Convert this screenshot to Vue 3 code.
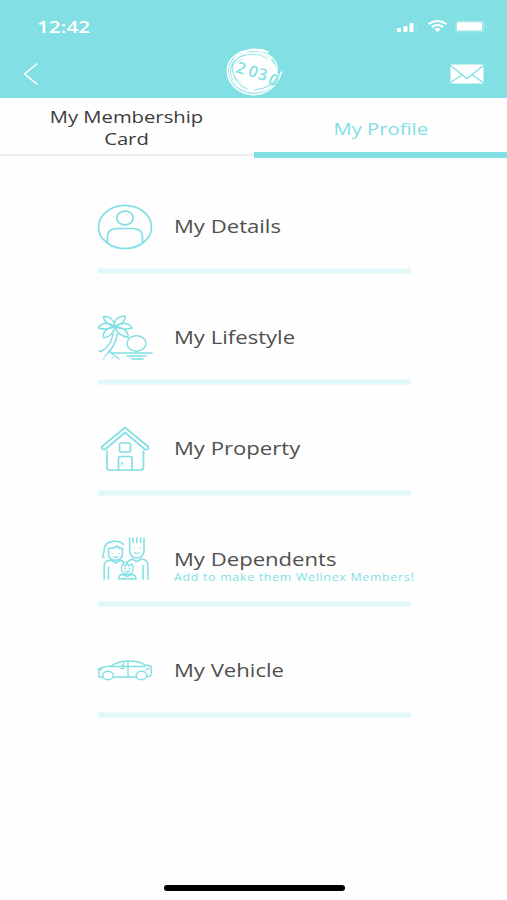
<template>
  <div class="screen">
    <header class="header">
      <div class="status">
        <span class="time">12:42</span>
        <svg class="status_icons" width="92" height="16" viewBox="0 0 92 16" fill="#fff">
          <rect x="1" y="10" width="4" height="4" rx="1" />
          <rect x="7.5" y="8" width="4" height="6" rx="1" />
          <rect x="13.5" y="5" width="4" height="9" rx="1" />
          <rect x="19.5" y="3" width="3" height="11" rx="1" opacity=".1" />
          <g fill="none" stroke="#fff" stroke-width="2.2">
            <path d="M32.5 6.2Q41.5 -.2 50.5 6.2" />
            <path d="M35.8 9Q41.5 5 47.2 9" />
          </g>
          <path d="M38.2 11.2Q41.5 9 44.8 11.2L41.5 14Z" />
          <rect x="59" y="2.5" width="29.5" height="12" rx="3" opacity=".22" />
          <rect x="61" y="4.3" width="25" height="8.2" rx="1.5" />
          <rect x="89.5" y="6.5" width="1.5" height="4" rx="1" opacity=".25" />
        </svg>
      </div>
      <nav class="bar">
        <svg class="back" width="16" height="24" viewBox="0 0 16 24">
          <path d="M14.5 1.5L1.5 12L14.5 22.5" fill="none" stroke="#fff" stroke-width="1.6" />
        </svg>
        <svg class="logo" width="60" height="50" viewBox="0 0 60 50">
          <ellipse cx="30" cy="25.5" rx="23" ry="19" fill="#fff" />
          <g fill="none" stroke="#fff" stroke-linecap="round">
            <path d="M44 5C31 -.5 12 3 5.5 15C-.5 28 7 43 24 47C39 50 53 41 57.5 25" stroke-width="1.6" />
            <path d="M40 3C25 1 10 7 6 20C3 33 14 44 29 45C43 45 52 37 54 27" stroke-width="1.3" />
            <path d="M17 5.5C31 0 47 6 52 16C54 21 53 26 52 29" stroke-width="1.3" />
            <path d="M11 12C20 3 38 4 47 12" stroke-width="1.8" />
            <path d="M48 38C42 44 34 46 24 44" stroke-width="1.5" />
          </g>
          <g fill="none" stroke="#82dfe3" stroke-linecap="round">
            <path d="M9 17C7 28 13 38 23 42" stroke-width="1" />
            <path d="M52 32C47 39 40 42 31 43" stroke-width="1.2" />
            <path d="M14 11C24 5 38 7 44 12" stroke-width=".7" />
            <path d="M11 16L19 12M11 30L17 36" stroke-width=".7" />
          </g>
          <text x="11 23 33 43" y="25 28 32 36" rotate="18 22 12 26" class="logo_text">2030</text>
        </svg>
        <svg class="mail" width="34" height="20" viewBox="0 0 34 20">
          <rect x=".5" y=".5" width="33" height="19" rx="1" fill="#fff" />
          <path d="M.5 1.5L17 14.5L33.5 1.5M.5 18.5L12.5 10.5M33.5 18.5L21.5 10.5" fill="none" stroke="#82dfe3" stroke-width="1.4" />
        </svg>
      </nav>
    </header>

    <div class="tabs">
      <div class="tab"><span class="tab_label">My Membership<br>Card</span></div>
      <div class="tab active"><span class="tab_label">My Profile</span></div>
    </div>

    <main class="list">
      <div v-for="item in items" :key="item.icon" class="row">
        <svg class="icon" width="56" height="50" viewBox="0 0 56 50">
          <g v-if="item.icon === 'user'">
            <ellipse cx="28" cy="25" rx="26.5" ry="21.6" />
            <ellipse cx="28" cy="16" rx="8.2" ry="6.9" />
            <path d="M10.5 41V35Q10.5 26.5 21 26.5H35Q45.5 26.5 45.5 35V41" />
          </g>
          <g v-else-if="item.icon === 'palm'" stroke-width="1.5">
            <path d="M18 13.5C17 7 13 3 6.500 3.500C6.500 8 11 12 18 13.500C12 8.500 3 10 1.500 15C7 17 13 16 18 13.500C11 14 5 19 6.500 24.500C13 24.500 17 19 18 13.500Z" />
            <path d="M18 13.5C16 8 20 3.500 28 3C29 8 24 12 18 13.500C24 8.500 33 10 35 15C29 17 23 16 18 13.500C26 14 32 19 31 24.500C24 23.500 19 19 18 13.500Z" />
            <path d="M16 21C15 28 12 34 4 38.5L2 38M20.5 21C19 29 16 35 10 41M12 38L22 46" />
            <ellipse cx="39.5" cy="30.5" rx="9.5" ry="7.8" />
            <path d="M14 40H55M30 43H49M35 46H46" />
            <path d="M9 42L8 43M6.5 45.5h.5M15 44.5h.5" />
          </g>
          <g v-else-if="item.icon === 'house'">
            <path d="M28 3.5L4.500 23Q4.500 26 8 25.500L28 8.500L48 25.500Q52 26 51.500 23Z" />
            <path d="M10 27V43.5Q10 46 13 46H43.5Q46.5 46 46.5 43.5V27" />
            <rect x="22.5" y="19" width="11" height="9" rx="2" />
            <path d="M21.5 46V34Q21.5 32.5 23.5 32.5H33Q35 32.5 35 34V46M25 38.5V40" />
          </g>
          <g v-else-if="item.icon === 'family'" stroke-width="1.6" transform="translate(-.5 -.5) scale(.96 1)">
            <path d="M12.5 14V19C12.5 28 27 28 27 19V14Q23 14 21.5 11.5Q18 14 12.5 14ZM8 23Q5 23 7 20Q8 18 8 15C8 5 25 5 28 10" />
            <path d="M34.500 3.500V16C34.500 26 49.500 26 49.500 16V3.500M38 3.500V8M42 3.500V8M46 3.500V8" />
            <path d="M8 44.5V30Q9 26 15 25.500L20 28.500L25 25.500L29 28" />
            <path d="M12.5 33V44.5M31 28L37 24.500L42 27L47 24.500Q53.500 25 53.500 31V44.500M48.500 31V44.500" />
            <path d="M16 19h.5M23 19h.5M17.500 22Q20 24 22 22M39 14h.5M45 14h.5M40 18Q42 20 44.500 18" stroke-width="1.1" />
            <path d="M26 31.500L28 29.500L30 31.500L32 29L34 31.500L36.500 29.500L38 31.500V34.500C38 41.500 26 41.500 26 34.500ZM29.500 34h.5M34 34h.5M30 36.500Q32 38.500 34 36.500" stroke-width="1.3" />
            <path d="M23 44.5Q22.500 40 28 40L32 42L36 40Q41.500 40 41 44.500ZM28 44.500V43.500M36 44.500V43.500" />
          </g>
          <g v-else stroke-width="1.4">
            <path d="M5.5 31H2L1.500 23Q6 20.500 14 20Q21 15.500 30 15Q42 14.500 48 19L54 20Q55 28 53 30.500H50M17 31H38.500" />
            <path d="M13 20.5H48M31 15V31M24 22.5H27M25 20L27 17M52 22L49 24M2 24L5 23" />
            <ellipse cx="11" cy="29.5" rx="5.3" ry="4.3" />
            <ellipse cx="44.5" cy="29.5" rx="5.3" ry="4.3" />
          </g>
        </svg>
        <div class="text">
          <span class="title">{{ item.title }}</span>
          <span v-if="item.note" class="note">{{ item.note }}</span>
        </div>
      </div>
    </main>

    <div class="home_bar"></div>
  </div>
</template>

<script setup>
const items = [
  { icon: 'user', title: 'My Details' },
  { icon: 'palm', title: 'My Lifestyle' },
  { icon: 'house', title: 'My Property' },
  { icon: 'family', title: 'My Dependents', note: 'Add to make them Wellnex Members!' },
  { icon: 'car', title: 'My Vehicle' },
];
</script>

<style>
body {
  margin: 0;
  background: #fefefe;
}
</style>

<style scoped>
.screen {
  display: flex;
  flex-direction: column;
  width: 507px;
  height: 900px;
  overflow: hidden;
  background: #fefefe;
  font-family: "Open Sans", "Noto Sans", sans-serif;
}

.header {
  height: 98px;
  background: #82dfe3;
}

.status {
  display: flex;
  justify-content: space-between;
  height: 47px;
  padding: 18px 19px 0 37px;
  box-sizing: border-box;
}

.time {
  height: 17px;
  color: #fff;
  font-size: 17px;
  font-weight: 600;
  line-height: 17px;
  transform: scaleX(1.22);
  transform-origin: left;
}

.bar {
  display: flex;
  align-items: center;
  justify-content: space-between;
  height: 50px;
  padding: 0 23px;
}

.back {
  margin-top: 4px;
}

.logo {
  margin-left: 19px;
  margin-top: -1px;
}

.logo_text {
  font-family: "Open Sans", sans-serif;
  font-size: 16px;
  font-weight: 600;
  fill: #82dfe3;
}

.mail {
  margin-top: 3px;
}

.tabs {
  display: flex;
  height: 60px;
}

.tab {
  display: flex;
  flex: 1;
  align-items: center;
  justify-content: center;
  height: 58px;
  padding-top: 4px;
  box-sizing: border-box;
  border-bottom: 2px solid #ececec;
  color: #3c3c3c;
  font-size: 17px;
  line-height: 22px;
  text-align: center;
}

.tab_label {
  transform: scaleX(1.19);
}

.tab.active {
  height: 60px;
  padding-top: 7px;
  border-bottom: 6px solid #82dfe3;
  color: #82dfe3;
}

.list {
  flex: 1;
  padding: 5px 96px 0 97px;
}

.row {
  display: flex;
  align-items: center;
  height: 111px;
  padding-top: 15px;
  box-sizing: border-box;
  background: linear-gradient(#f0fbfb, #dff7f7 35%, #dff7f7 65%, #f0fbfb) 1px 105px / 313px 6px no-repeat;
}

.icon {
  flex: none;
  margin-top: 1px;
  margin-right: 21px;
  fill: none;
  stroke: #82dfe3;
  stroke-width: 1.7;
  stroke-linecap: round;
  stroke-linejoin: round;
}

.text {
  display: flex;
  flex-direction: column;
  align-items: flex-start;
  height: 28px;
  white-space: nowrap;
}

.title {
  height: 25px;
  color: #505050;
  font-size: 19px;
  line-height: 28px;
  transform: scaleX(1.163);
  transform-origin: left;
}

.note {
  color: #82dfe3;
  font-size: 11px;
  line-height: 14px;
  letter-spacing: 0.6px;
  transform: scaleX(1.13);
  transform-origin: left;
}

.home_bar {
  width: 181px;
  height: 6px;
  margin: 0 auto 9px;
  transform: translateX(1px);
  border-radius: 3px;
  background: #000;
}
</style>
